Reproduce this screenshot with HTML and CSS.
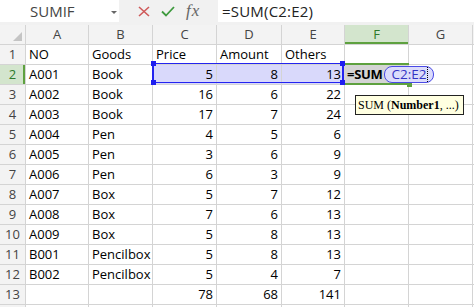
FILE: index.html
```html
<!DOCTYPE html>
<html lang="en">
<head>
  <meta charset="UTF-8">
  <title>SUM</title>
  <link rel="stylesheet" href="styles.css">
</head>
<body>
  <div class="topbar">
    <div class="namebox">SUMIF<span class="dropdown"></span></div>
    <div class="tools">
      <svg class="icon" width="12" height="11" viewBox="0 0 12 11">
        <path d="M1 1 L11 10 M11 1 L1 10" stroke="#cf5a5a" stroke-width="1.6" fill="none"/>
      </svg>
      <svg class="icon" width="14" height="11" viewBox="0 0 14 11">
        <path d="M1 5.5 L5 9.5 L13 1" stroke="#3e9a3e" stroke-width="1.8" fill="none"/>
      </svg>
      <span class="fx">fx</span>
    </div>
    <div class="formula">=SUM(C2:E2)</div>
  </div>

  <div class="sheet">
    <!-- column headers -->
    <div class="hd corner"><span class="tri"></span></div>
    <div class="hd">A</div><div class="hd">B</div><div class="hd">C</div><div class="hd">D</div>
    <div class="hd">E</div><div class="hd hd-active">F</div><div class="hd">G</div><div class="hd"></div>

    <div class="rh">1</div><div class="c">NO</div><div class="c">Goods</div><div class="c">Price</div><div class="c">Amount</div><div class="c">Others</div><div class="c"></div><div class="c"></div><div class="c"></div>
    <div class="rh rh-active">2</div><div class="c">A001</div><div class="c">Book</div><div class="c n sel">5</div><div class="c n sel">8</div><div class="c n sel">13</div>
    <div class="c edit"><b>=SUM</b><span class="ref">C2:E2<i class="caret"></i></span></div><div class="c"></div><div class="c"></div>
    <div class="rh">3</div><div class="c">A002</div><div class="c">Book</div><div class="c n">16</div><div class="c n">6</div><div class="c n">22</div><div class="c"></div><div class="c"></div><div class="c"></div>
    <div class="rh">4</div><div class="c">A003</div><div class="c">Book</div><div class="c n">17</div><div class="c n">7</div><div class="c n">24</div><div class="c"></div><div class="c"></div><div class="c"></div>
    <div class="rh">5</div><div class="c">A004</div><div class="c">Pen</div><div class="c n">4</div><div class="c n">5</div><div class="c n">6</div><div class="c"></div><div class="c"></div><div class="c"></div>
    <div class="rh">6</div><div class="c">A005</div><div class="c">Pen</div><div class="c n">3</div><div class="c n">6</div><div class="c n">9</div><div class="c"></div><div class="c"></div><div class="c"></div>
    <div class="rh">7</div><div class="c">A006</div><div class="c">Pen</div><div class="c n">6</div><div class="c n">3</div><div class="c n">9</div><div class="c"></div><div class="c"></div><div class="c"></div>
    <div class="rh">8</div><div class="c">A007</div><div class="c">Box</div><div class="c n">5</div><div class="c n">7</div><div class="c n">12</div><div class="c"></div><div class="c"></div><div class="c"></div>
    <div class="rh">9</div><div class="c">A008</div><div class="c">Box</div><div class="c n">7</div><div class="c n">6</div><div class="c n">13</div><div class="c"></div><div class="c"></div><div class="c"></div>
    <div class="rh">10</div><div class="c">A009</div><div class="c">Box</div><div class="c n">5</div><div class="c n">8</div><div class="c n">13</div><div class="c"></div><div class="c"></div><div class="c"></div>
    <div class="rh">11</div><div class="c">B001</div><div class="c">Pencilbox</div><div class="c n">5</div><div class="c n">8</div><div class="c n">13</div><div class="c"></div><div class="c"></div><div class="c"></div>
    <div class="rh">12</div><div class="c">B002</div><div class="c">Pencilbox</div><div class="c n">5</div><div class="c n">4</div><div class="c n">7</div><div class="c"></div><div class="c"></div><div class="c"></div>
    <div class="rh">13</div><div class="c"></div><div class="c"></div><div class="c n">78</div><div class="c n">68</div><div class="c n">141</div><div class="c"></div><div class="c"></div><div class="c"></div>
    <div class="rh"></div><div class="c"></div><div class="c"></div><div class="c"></div><div class="c"></div><div class="c"></div><div class="c"></div><div class="c"></div><div class="c"></div>

    <!-- selection overlays -->
    <div class="range">
      <span class="handle tl"></span><span class="handle bl"></span>
      <span class="handle tr"></span><span class="handle br"></span>
    </div>
    <div class="active"><span class="fill"></span></div>
    <div class="tip">SUM (<b>Number1</b>, ...)</div>
  </div>
</body>
</html>
```

FILE: styles.css
```css
body {
  margin: 0;
  width: 474px;
  height: 307px;
  overflow: hidden;
  background: #fff;
  font-family: "Open Sans", sans-serif;
}

/* formula bar */
.topbar {
  display: flex;
  height: 25px;
  background: #f1f1f1;
}

.namebox {
  position: relative;
  width: 119px;
  height: 22px;
  background: #fff;
  font-size: 15px;
  line-height: 22px;
  color: #444;
  padding-left: 30px;
  box-sizing: border-box;
}

.dropdown {
  position: absolute;
  left: 111px;
  top: 11px;
  border-left: 3px solid transparent;
  border-right: 3px solid transparent;
  border-top: 3px solid #666;
}

.tools {
  width: 99px;
  display: flex;
  align-items: center;
  height: 22px;
  padding-left: 19px;
  box-sizing: border-box;
  gap: 11px;
}

.fx {
  font-family: "Liberation Serif", serif;
  font-style: italic;
  font-size: 17px;
  color: #666;
  letter-spacing: 1px;
}

.formula {
  flex: 1;
  height: 22px;
  background: #fff;
  font-size: 15px;
  line-height: 22px;
  padding-left: 4px;
  color: #222;
  letter-spacing: 0.2px;
}

/* grid */
.sheet {
  position: relative;
  display: grid;
  grid-template-columns: 25px 62px 63px 63px 64px 62px 63px 63px 20px;
  grid-template-rows: 19px;
  grid-auto-rows: 19px;
  gap: 1px;
  background: #d4d4d4;
  font-size: 13px;
  line-height: 19px;
}

.hd {
  background: #f3f3f3;
  color: #444;
  text-align: center;
  font-size: 13px;
}

.corner {
  position: relative;
}

.tri {
  position: absolute;
  right: 3px;
  bottom: 3px;
  border-left: 9px solid transparent;
  border-bottom: 9px solid #c4c4c4;
}

.hd-active {
  background: #d3e5cd;
  color: #2f7a2c;
  box-shadow: inset 0 -2px 0 #5ea13f;
}

.rh {
  background: #f3f3f3;
  color: #444;
  text-align: center;
}

.rh-active {
  background: #d3e5cd;
  color: #2f7a2c;
  box-shadow: inset -2px 0 0 #5ea13f;
}

.c {
  background: #fff;
  color: #000;
  padding: 0 3px;
  white-space: nowrap;
  overflow: hidden;
}

.n {
  text-align: right;
}

.sel {
  background: #d9d9fb;
}

.edit {
  position: relative;
  z-index: 2;
  overflow: visible;
  background: transparent;
  display: flex;
  align-items: center;
  padding-left: 2px;
}

.edit b {
  font-weight: 700;
  letter-spacing: -0.3px;
}

.ref {
  display: inline-block;
  position: relative;
  margin-left: 2px;
  padding: 0 7px 0 6px;
  height: 15px;
  line-height: 15px;
  border: 1.5px solid #4a4ae6;
  border-radius: 8px;
  background: #dcdcfb;
  color: #3434c4;
  font-size: 13.5px;
}

.caret {
  position: absolute;
  right: 5px;
  top: 0;
  height: 15px;
  border-left: 1px dotted #000;
}

/* overlays */
.range {
  position: absolute;
  left: 152px;
  top: 38px;
  width: 192px;
  height: 20px;
  box-sizing: border-box;
  border: 1px solid #2424f0;
  border-left-width: 2px;
  border-right-width: 2px;
  z-index: 3;
}

.handle {
  position: absolute;
  width: 5px;
  height: 5px;
  background: #1e1ef0;
}

.tl { left: -3px; top: -3px; }
.bl { left: -3px; bottom: -3px; }
.tr { right: -3px; top: -3px; }
.br { right: -3px; bottom: -3px; }

.active {
  position: absolute;
  left: 345px;
  top: 38px;
  width: 64px;
  height: 22px;
  box-sizing: border-box;
  border-top: 2px solid #5ea13f;
  border-bottom: 2px solid #5ea13f;
  z-index: 1;
}

.fill {
  position: absolute;
  right: -3px;
  bottom: -4px;
  width: 5px;
  height: 4px;
  background: #5ea13f;
}

.tip {
  position: absolute;
  left: 355px;
  top: 70px;
  width: 109px;
  height: 20px;
  box-sizing: border-box;
  border: 1px solid #222;
  background: #ffffe1;
  font-family: "Liberation Serif", serif;
  font-size: 12px;
  line-height: 18px;
  padding-left: 2px;
  white-space: nowrap;
  z-index: 4;
}
```
